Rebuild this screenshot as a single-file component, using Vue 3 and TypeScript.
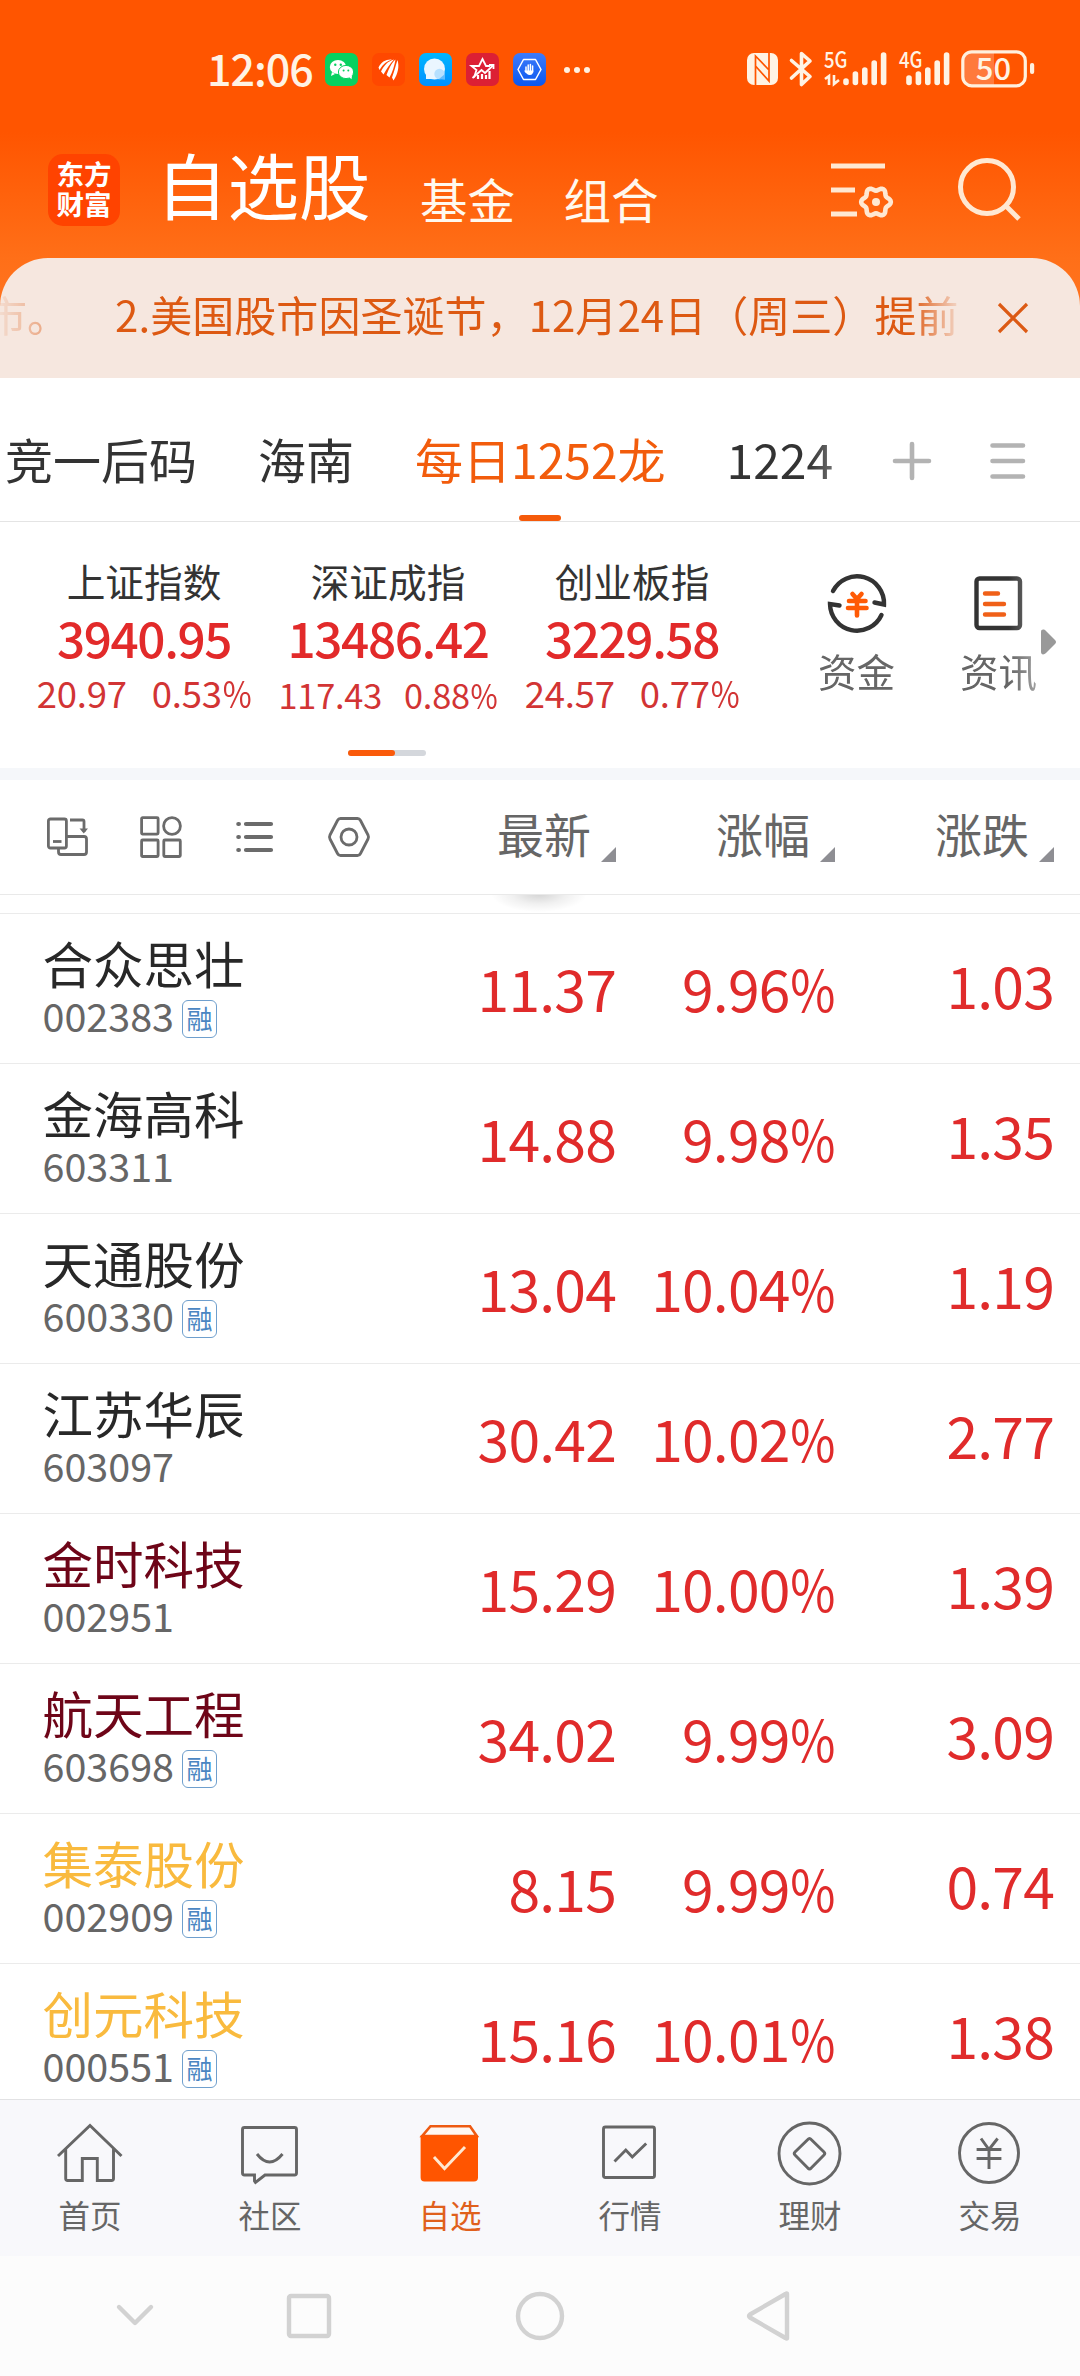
<script setup lang="ts">
interface Quote {
  name: string
  value: string
  change: string
  percent: string
  small?: boolean
}
interface Stock {
  name: string
  code: string
  margin: boolean
  price: string
  percent: string
  change: string
  tone: string
}
interface Signal {
  label: string
  arrows: boolean
  tops: number[]
  x0: number
  width: number
}

const signals: Signal[] = [
  { label: '5G', arrows: true, tops: [27, 20, 16, 9, 1], x0: 22, width: 64 },
  { label: '4G', arrows: false, tops: [24, 20, 16, 9, 1], x0: 10, width: 52 },
]

const quotes: Quote[] = [
  { name: '上证指数', value: '3940.95', change: '20.97', percent: '0.53' },
  { name: '深证成指', value: '13486.42', change: '117.43', percent: '0.88', small: true },
  { name: '创业板指', value: '3229.58', change: '24.57', percent: '0.77' },
]

const columns: string[] = ['最新', '涨幅', '涨跌']

const stocks: Stock[] = [
  { name: '合众思壮', code: '002383', margin: true, price: '11.37', percent: '9.96', change: '1.03', tone: 'plain' },
  { name: '金海高科', code: '603311', margin: false, price: '14.88', percent: '9.98', change: '1.35', tone: 'plain' },
  { name: '天通股份', code: '600330', margin: true, price: '13.04', percent: '10.04', change: '1.19', tone: 'plain' },
  { name: '江苏华辰', code: '603097', margin: false, price: '30.42', percent: '10.02', change: '2.77', tone: 'plain' },
  { name: '金时科技', code: '002951', margin: false, price: '15.29', percent: '10.00', change: '1.39', tone: 'wine' },
  { name: '航天工程', code: '603698', margin: true, price: '34.02', percent: '9.99', change: '3.09', tone: 'wine' },
  { name: '集泰股份', code: '002909', margin: true, price: '8.15', percent: '9.99', change: '0.74', tone: 'gold' },
  { name: '创元科技', code: '000551', margin: true, price: '15.16', percent: '10.01', change: '1.38', tone: 'gold' },
]

// Six-lobed outline of the settings gear
const gear: string =
  Array.from({ length: 72 }, (_, i) => {
    const a = (i * Math.PI) / 36
    const r = 13.1 + 1.7 * Math.cos(6 * a)
    return `${i ? 'L' : 'M'}${(45 + r * Math.cos(a)).toFixed(2)} ${(42 + r * Math.sin(a)).toFixed(2)}`
  }).join('') + 'Z'
</script>

<template>
  <div class="screen">
    <header class="top">
      <div class="status">
        <span class="clock">12:06</span>
        <div class="apps">
          <svg width="33" height="33" viewBox="0 0 33 33">
            <rect width="33" height="33" rx="7" fill="#07d160" />
            <ellipse cx="13" cy="14" rx="8.2" ry="7" fill="#fff" />
            <path d="M7 19l-1 4 4-2z" fill="#fff" />
            <circle cx="10.300" cy="11.800" r="1.200" fill="#07d160" />
            <circle cx="15.800" cy="11.800" r="1.200" fill="#07d160" />
            <ellipse cx="21" cy="19" rx="7.600" ry="6.600" fill="#fff" stroke="#07d160" stroke-width="1" />
            <path d="M24 24l2.500 2.200.5-4z" fill="#fff" />
            <circle cx="18.600" cy="17.500" r="1" fill="#07d160" />
            <circle cx="23.300" cy="17.500" r="1" fill="#07d160" />
          </svg>
          <svg width="33" height="33" viewBox="0 0 33 33">
            <rect width="33" height="33" rx="7" fill="#ff4800" />
            <path d="M6.500 14.500C9 9 14 6 20 6.500 15 8 11 11 7.500 17z" fill="#fff" />
            <path d="M9 18.500C12 12.500 16 8 22 6.500 17.500 11 15 15.500 11.500 21.500z" fill="#fff" />
            <path d="M14.500 22C17 16 19 10.500 23.500 6.500 22.500 12.500 20.500 19 17.500 24.500z" fill="#fff" />
            <path d="M20 24.500C22.500 18 23.500 13 25.500 7 27.500 13.500 26 21 21.500 27.500z" fill="#fff" />
          </svg>
          <svg width="33" height="33" viewBox="0 0 33 33">
            <defs>
              <linearGradient id="chat" x1="0" y1="0" x2="0" y2="1">
                <stop offset="0" stop-color="#00b6ff" />
                <stop offset="1" stop-color="#0090ff" />
              </linearGradient>
            </defs>
            <rect width="33" height="33" rx="7" fill="url(#chat)" />
            <circle cx="15.500" cy="16" r="10.500" fill="#eaf6ff" />
            <path d="M7 21v5h8z" fill="#eaf6ff" />
            <circle cx="20.500" cy="21" r="5.200" fill="#b5e0ff" />
            <path d="M20 26l6 .8V21z" fill="#5fbcff" />
          </svg>
          <svg width="33" height="33" viewBox="0 0 33 33" fill="none" stroke="#fff" stroke-width="1.800">
            <rect width="33" height="33" rx="7" fill="#dc2034" stroke="none" />
            <path d="M8 24.500l2.500-7.500L5.500 13h7.500l3.500-7 3.500 7h4" />
            <path d="M6.500 25l9-8 3.500 3 8-7.500" />
            <path d="M23 12h4.500v4" />
            <path d="M12 26v-4M16 26v-5M20 26v-4M23.500 26v-8" stroke-width="2.200" />
          </svg>
          <svg width="33" height="33" viewBox="0 0 33 33">
            <defs>
              <linearGradient id="guard" x1="0" y1="0" x2="0" y2="1">
                <stop offset="0" stop-color="#3d7bfa" />
                <stop offset="1" stop-color="#0a57f0" />
              </linearGradient>
            </defs>
            <rect width="33" height="33" rx="7" fill="url(#guard)" />
            <path d="M10.500 6.500h12l5.500 10-5.500 10h-12L5 16.500z" fill="none" stroke="#fff" stroke-width="1.500" stroke-linejoin="round" />
            <path d="M13 14v5M15.200 12v6M17.400 11.500v7M19.600 13v6" stroke="#fff" stroke-width="1.500" stroke-linecap="round" />
            <path d="M12.300 17.500h8c0 2.500-1 4.500-3.500 4.500s-3.500-1.500-5.800-4.200z" fill="#fff" />
          </svg>
        </div>
        <svg class="more" width="28" height="8" viewBox="0 0 28 8" fill="#fff3e4">
          <circle cx="4" cy="4" r="3" />
          <circle cx="14" cy="4" r="3" />
          <circle cx="24" cy="4" r="3" />
        </svg>
        <div class="radios">
          <svg class="nfc" width="31" height="32" viewBox="0 0 31 32">
            <rect width="31" height="32" rx="7" fill="#fff3e4" />
            <path d="M8.500 32V3l13.500 14V0M8.500 13l13.500 15V3" fill="none" stroke="#ff5500" stroke-width="1.700" />
          </svg>
          <svg class="bt" width="24" height="36" viewBox="0 0 24 36" fill="none" stroke="#fff3e4" stroke-width="3.600" stroke-linejoin="round" stroke-linecap="round">
            <path d="M2.500 9.500l18.500 16-8.500 8V2.500l8.500 7.500L2.500 27" />
          </svg>
          <svg
            v-for="s in signals"
            :key="s.label"
            class="signal"
            :width="s.width"
            height="36"
            :viewBox="`0 0 ${s.width} 36`"
            fill="none"
            stroke="#fff3e4"
          >
            <text x="0" y="17" font-size="22.500" textLength="23.500" lengthAdjust="spacingAndGlyphs">{{ s.label }}</text>
            <path v-if="s.arrows" d="M1 28l4-3v9M10 24v9l5-4" stroke-width="2.600" />
            <path
              v-for="(t, i) in s.tops"
              :key="i"
              :d="`M${s.x0 + i * 9.4} ${t + 3}V31.500`"
              stroke-width="5.600"
              stroke-linecap="round"
            />
          </svg>
          <svg class="battery" width="74" height="38" viewBox="0 0 74 38">
            <path d="M11 3H33V35H11a8 8 0 0 1-8-8V11a8 8 0 0 1 8-8z" fill="#ff7a3c" />
            <rect x="1.800" y="1.800" width="62.500" height="34" rx="9" fill="none" stroke="#fff0de" stroke-width="3.200" />
            <rect x="69" y="13" width="4.200" height="11" rx="2" fill="#fff0de" />
            <text x="32.500" y="30" font-size="31" text-anchor="middle">50</text>
          </svg>
        </div>
      </div>
      <nav class="titlebar">
        <div class="logo"><span>东方</span><span>财富</span></div>
        <span class="title">自选股</span>
        <span class="sub">基金</span>
        <span class="sub">组合</span>
        <svg class="filter" width="66" height="62" viewBox="0 0 66 62" fill="none" stroke="#ffe8d2" stroke-width="5">
          <path d="M0 6H54M0 30H24M0 54H26" />
          <path :d="gear" stroke-width="4.600" />
          <circle cx="45" cy="42" r="4" fill="#ffe8d2" stroke="none" />
        </svg>
        <svg class="search" width="64" height="64" viewBox="0 0 64 64" fill="none" stroke="#ffe8d2" stroke-width="5">
          <circle cx="29" cy="29" r="26.500" />
          <path d="M47.500 47.500L61 61" />
        </svg>
      </nav>
      <div class="notice">
        <div class="ticker"><span>市。</span><span class="msg">2.美国股市因圣诞节，12月24日（周三）提前</span></div>
        <svg width="30" height="30" viewBox="0 0 30 30" stroke="#dc5a14" stroke-width="3.200">
          <path d="M1 1L29 29M29 1L1 29" />
        </svg>
      </div>
    </header>

    <section class="tabs">
      <div class="groups">
        <span>竞一后码</span>
        <span>海南</span>
        <span class="on">每日1252龙</span>
        <span>1224</span>
      </div>
      <svg class="plus" width="40" height="40" viewBox="0 0 40 40" stroke="#b3b3b3" stroke-width="4.600" stroke-linecap="round">
        <path d="M20 3V37M3 20H37" />
      </svg>
      <svg class="menu" width="38" height="40" viewBox="0 0 38 40" stroke="#b3b3b3" stroke-width="4.600" stroke-linecap="round">
        <path d="M3.500 4.500H34M3.500 20H34M3.500 35.500H34" />
      </svg>
    </section>

    <section class="indices">
      <div class="quotes">
        <div v-for="q in quotes" :key="q.name" class="quote">
          <span class="qname">{{ q.name }}</span>
          <span class="qvalue">{{ q.value }}</span>
          <span class="qsub" :class="{ small: q.small }">
            <span>{{ q.change }}</span><span>{{ q.percent }}<i class="pct">%</i></span>
          </span>
        </div>
        <div class="pager"><b></b></div>
      </div>
      <div class="tools">
        <div class="tool">
          <svg width="64" height="64" viewBox="0 0 64 64" fill="none" stroke="#333" stroke-width="4.400" stroke-linecap="round">
            <path d="M8 20A27 27 0 0 1 59 33.500L49.500 31.500" />
            <path d="M56.500 44A27 27 0 0 1 5 33L14.500 34.500" />
            <path d="M27.500 23L32 28 36.500 23M24 30H40.500M23 37H41.500M32 28V44.500" stroke="#ff5a05" stroke-width="4.600" />
          </svg>
          <span>资金</span>
        </div>
        <div class="tool">
          <svg width="64" height="64" viewBox="0 0 64 64" fill="none" stroke="#333" stroke-width="4.400" stroke-linecap="round">
            <rect x="9.500" y="7.500" width="43.500" height="49.500" rx="3" />
            <path d="M18 22.500H31M18 33H37M18 43.500H37" stroke="#f06018" />
          </svg>
          <span>资讯</span>
        </div>
      </div>
      <svg class="next" width="16" height="26" viewBox="0 0 16 26">
        <path d="M0 3C0 0 3 0 5 2L14 11Q16 13 14 15L5 24C3 26 0 26 0 23z" fill="#999" />
      </svg>
    </section>

    <section class="thead">
      <div class="views">
        <svg width="44" height="44" viewBox="0 0 44 44" fill="none" stroke="#6b6b6b" stroke-width="2.800">
          <rect x="3.400" y="4" width="18" height="29" rx="2" />
          <path d="M8 26.500H16.500" />
          <path d="M13.500 33v4q0 2.500 2.500 2.500H39q2.500 0 2.500-2.500V24q0-2.500-2.500-2.500H22" />
          <path d="M25 5H37.500q1.500 0 1.500 1.500V17" />
          <path d="M34.500 13.500H43L38.800 18.500z" fill="#6b6b6b" stroke="none" />
        </svg>
        <svg width="44" height="44" viewBox="0 0 44 44" fill="none" stroke="#6b6b6b" stroke-width="2.800">
          <rect x="2.600" y="2.600" width="16.500" height="16.500" rx="1" />
          <circle cx="33" cy="11" r="8.400" />
          <rect x="2.600" y="25" width="16.500" height="16.500" rx="1" />
          <rect x="24.800" y="25" width="16.500" height="16.500" rx="1" />
        </svg>
        <svg width="44" height="44" viewBox="0 0 44 44" fill="none" stroke="#6b6b6b" stroke-width="4.200" stroke-linecap="round">
          <path d="M13 9H38M13 22H38M13 35H38M5.300 9h.6M5.300 22h.6M5.300 35h.6" />
        </svg>
        <svg width="44" height="44" viewBox="0 0 44 44" fill="none" stroke="#6b6b6b" stroke-width="2.800" stroke-linejoin="round">
          <path d="M13.500 3.500H30.500Q32.500 3.500 33.500 5.500L41 20Q42 22 41 24L33.500 38.500Q32.500 40.500 30.500 40.500H13.500Q11.500 40.500 10.500 38.500L3 24Q2 22 3 20L10.500 5.500Q11.500 3.500 13.500 3.500z" />
          <circle cx="22" cy="22" r="8" />
        </svg>
      </div>
      <div v-for="c in columns" :key="c" class="col">
        <span>{{ c }}</span>
        <svg width="15" height="15" viewBox="0 0 15 15"><path d="M15 0V15H0z" fill="#8e8e93" /></svg>
      </div>
    </section>

    <main class="list">
      <div class="peek"><i></i></div>
      <div v-for="s in stocks" :key="s.code" class="row">
        <div class="who">
          <span class="name" :class="s.tone">{{ s.name }}</span>
          <span class="code">{{ s.code }}<em v-if="s.margin">融</em></span>
        </div>
        <span class="num price">{{ s.price }}</span>
        <span class="num percent">{{ s.percent }}<i class="pct">%</i></span>
        <span class="num change">{{ s.change }}</span>
      </div>
    </main>

    <nav class="tabbar">
      <div class="item">
        <svg width="72" height="72" viewBox="0 0 72 72"><path d="M4 38L36 7.500 67.500 38M11.700 31V60.500q0 2 2 2H28.300V40.500H43.300V62.500H57.500q2 0 2-2V31" /></svg>
        <span>首页</span>
      </div>
      <div class="item">
        <svg width="72" height="72" viewBox="0 0 72 72">
          <path d="M10.500 9.500H60.500q2 0 2 2V55q0 2-2 2H31L21.500 64.500 20.500 63V57H10.500q-2 0-2-2V11.500q0-2 2-2z" />
          <path d="M23 36Q35.500 52 48.500 36" />
        </svg>
        <span>社区</span>
      </div>
      <div class="item on">
        <svg width="72" height="72" viewBox="0 0 72 72">
          <path d="M16.500 8.200H56L62.800 18H8.200z" stroke="#ee5a12" fill="#fff8f2" stroke-width="2.600" />
          <path d="M6.600 17.500H64V59.500a4 4 0 0 1-4 4H10.600a4 4 0 0 1-4-4z" fill="#ff5500" stroke="none" />
          <path d="M20 39L30.500 50.500 51 29" stroke="#ffe8d0" />
        </svg>
        <span>自选</span>
      </div>
      <div class="item">
        <svg width="72" height="72" viewBox="0 0 72 72">
          <rect x="9.500" y="9" width="51" height="50.500" rx="2" />
          <path d="M20.500 43.500L31.800 32 38.300 39 52.200 25.500" />
        </svg>
        <span>行情</span>
      </div>
      <div class="item">
        <svg width="72" height="72" viewBox="0 0 72 72">
          <circle cx="35.500" cy="35.500" r="30.500" />
          <path d="M33.800 21.500Q35.500 19.500 37.200 21.500L50 34Q51.500 35.500 50 37L37.200 50Q35.500 52 33.800 50L21 37Q19.500 35.500 21 34z" />
        </svg>
        <span>理财</span>
      </div>
      <div class="item">
        <svg width="72" height="72" viewBox="0 0 72 72">
          <circle cx="35" cy="35" r="29.500" />
          <path d="M27 20.500L35 31.500 43.600 20.500M22.600 31.500H47.400M22.600 40.500H47.400M35 31V51" />
        </svg>
        <span>交易</span>
      </div>
    </nav>

    <footer class="sysbar">
      <svg class="k1" width="48" height="60" viewBox="0 0 48 60"><path d="M8 21L24 37 40 21" /></svg>
      <svg class="k2" width="48" height="60" viewBox="0 0 48 60"><rect x="4" y="10" width="40" height="40" rx="2" /></svg>
      <svg class="k3" width="48" height="60" viewBox="0 0 48 60"><circle cx="24" cy="30" r="22" /></svg>
      <svg class="k4" width="48" height="60" viewBox="0 0 48 60"><path d="M42 8V52Q42 53 40.500 52L5 31.500Q3 30 5 28.500L40.500 8Q42 7 42 8z" /></svg>
    </footer>
  </div>
</template>

<style>
body {
  background: #fff;
}
</style>

<style scoped>
.screen {
  display: flex;
  flex-direction: column;
  width: 1080px;
  height: 2376px;
  overflow: hidden;
  background: #fff;
  font-family: "Noto Sans CJK SC", sans-serif;
  line-height: 1;
  white-space: nowrap;
}
svg {
  display: block;
  flex: none;
  overflow: visible;
}
i,
em {
  font-style: normal;
}

/* header */
.top {
  flex: none;
  height: 378px;
  background: linear-gradient(#ff5500 0, #ff5500 132px, #ff6f18 258px, #ff7420 310px);
}
.status {
  display: flex;
  height: 130px;
  box-sizing: border-box;
  padding: 50px 0 0 207px;
}
.clock {
  width: 118px;
  margin-top: -4px;
  color: #fff3e4;
  font-size: 43px;
  font-weight: 500;
  letter-spacing: -1px;
}
.apps {
  display: flex;
  gap: 14px;
  margin-top: 3px;
}
.more {
  margin: 15.500px 0 0 17px;
}
.radios {
  display: flex;
  margin-left: 156px;
}
.radios text {
  fill: #fff3e4;
  stroke: none;
  font-weight: 500;
}
.nfc {
  margin-top: 3px;
}
.bt {
  margin: 1px 0 0 11px;
}
.signal {
  margin: 1px 0 0 11px;
}
.battery {
  margin-left: 10px;
}
.titlebar {
  display: flex;
  height: 128px;
  color: #fff;
}
.logo {
  display: flex;
  flex-direction: column;
  align-items: center;
  gap: 2px;
  width: 72px;
  height: 72px;
  box-sizing: border-box;
  margin: 24px 0 0 48px;
  padding-top: 6px;
  border-radius: 15px;
  background: #ff4300;
  font-size: 27.500px;
  font-weight: 700;
}
.title {
  width: 262px;
  margin: 18px 0 0 36px;
  font-size: 71.500px;
}
.sub {
  width: 143.500px;
  margin-top: 45px;
  font-size: 47.500px;
  color: #fff8ee;
}
.sub:nth-of-type(2) {
  margin-left: 2px;
}
.filter {
  margin: 30px 0 0 124px;
}
.search {
  margin: 28px 0 0 61px;
}
.notice {
  display: flex;
  height: 120px;
  border-radius: 48px 48px 0 0;
  background: #f6e7df;
  color: #dd5912;
}
.ticker {
  width: 957px;
  height: 100px;
  box-sizing: border-box;
  margin-right: 41px;
  padding-top: 34.500px;
  overflow: hidden;
  font-size: 42px;
  letter-spacing: 0.050px;
  -webkit-mask-image: linear-gradient(90deg, transparent -10px, #000 115px, #000 910px, transparent 965px);
  mask-image: linear-gradient(90deg, transparent -10px, #000 115px, #000 910px, transparent 965px);
}
.ticker span:first-child {
  margin-left: -15px;
}
.msg {
  margin-left: 46px;
}
.notice svg {
  margin-top: 45px;
}

/* watchlist groups */
.tabs {
  display: flex;
  flex: none;
  height: 144px;
  box-sizing: border-box;
  border-bottom: 1px solid #e4e4e4;
}
.groups {
  display: flex;
  gap: 61px;
  width: 843px;
  padding-left: 5px;
  box-sizing: border-box;
  color: #333;
  font-size: 48px;
  -webkit-mask-image: linear-gradient(90deg, #000 808px, rgba(0, 0, 0, 0.6) 843px);
  mask-image: linear-gradient(90deg, #000 808px, rgba(0, 0, 0, 0.6) 843px);
}
.groups span {
  padding-top: 56px;
}
.groups .on {
  display: flex;
  flex-direction: column;
  align-items: center;
  color: #f25c0c;
}
.groups .on::after {
  content: "";
  width: 42px;
  height: 6px;
  margin-top: 33px;
  border-radius: 3px;
  background: #f55a0a;
}
.plus {
  margin: 63px 0 0 49px;
}
.menu {
  margin: 63px 0 0 56.500px;
}

/* market indices */
.indices {
  display: flex;
  flex: none;
  height: 246px;
}
.quotes {
  display: flex;
  flex-wrap: wrap;
  width: 732px;
  margin-left: 22px;
  align-content: flex-start;
}
.quote {
  display: flex;
  flex-direction: column;
  align-items: center;
  width: 244px;
  height: 228px;
}
.qname {
  margin-top: 38.500px;
  color: #333;
  font-size: 38.700px;
}
.qvalue {
  margin-top: 13px;
  color: #e22a2a;
  font-size: 49.500px;
  font-weight: 500;
  letter-spacing: -1.400px;
}
.qsub {
  display: flex;
  gap: 25px;
  height: 38px;
  margin-top: 13.500px;
  color: #d23434;
  font-size: 36.500px;
  letter-spacing: -0.200px;
}
.qsub.small {
  gap: 22px;
  padding-top: 1.500px;
  font-size: 34.300px;
}
.pct {
  display: inline-block;
  margin-left: -0.11em;
  transform: scaleX(0.86);
  transform-origin: right;
}
.pager {
  width: 78px;
  height: 6px;
  margin-left: 326px;
  border-radius: 3px;
  background: #d4d7dc;
}
.pager b {
  display: block;
  width: 47px;
  height: 6px;
  border-radius: 3px;
  background: #fa5a0a;
}
.tools {
  display: flex;
  gap: 65px;
  width: 284px;
  padding-left: 64px;
  box-sizing: border-box;
  color: #666;
  font-size: 38.500px;
  -webkit-mask-image: linear-gradient(90deg, #000 255px, rgba(0, 0, 0, 0.6) 284px);
  mask-image: linear-gradient(90deg, #000 255px, rgba(0, 0, 0, 0.6) 284px);
}
.tool {
  display: flex;
  flex-direction: column;
  align-items: center;
  width: 77px;
  flex: none;
}
.tool svg {
  margin: 49px 0 0;
}
.tool span {
  margin-top: 16px;
}
.next {
  margin: 107px 0 0 3px;
}

/* table header */
.thead {
  display: flex;
  flex: none;
  height: 127px;
  box-sizing: border-box;
  border-top: 12px solid #f5f7fa;
  border-bottom: 1px solid #e9e9e9;
}
.views {
  display: flex;
  gap: 50px;
  width: 397px;
  padding: 35px 0 0 45px;
  box-sizing: border-box;
}
.col {
  display: flex;
  justify-content: flex-end;
  width: 219px;
  color: #666;
  font-size: 47px;
}
.col span {
  margin: 29px 10px 0 0;
}
.col svg {
  margin-top: 67px;
}

/* stock list */
.list {
  flex: none;
  height: 1204px;
  overflow: hidden;
}
.peek {
  height: 19px;
  box-sizing: border-box;
  border-bottom: 1px solid #ebebeb;
  overflow: hidden;
}
.peek i {
  display: block;
  width: 96px;
  height: 36px;
  margin: -19px 0 0 491px;
  background: radial-gradient(closest-side, rgba(0, 0, 0, 0.17), rgba(0, 0, 0, 0.06) 55%, transparent);
}
.row {
  display: flex;
  height: 150px;
  box-sizing: border-box;
  border-bottom: 1px solid #ebebeb;
}
.who {
  display: flex;
  flex-direction: column;
  width: 397px;
  padding: 22.500px 0 0 42.500px;
  box-sizing: border-box;
}
.name {
  font-size: 50.500px;
}
.plain {
  color: #282828;
}
.wine {
  color: #6e0518;
}
.gold {
  color: #f9ba3e;
}
.code {
  display: flex;
  margin-top: 8px;
  color: #666;
  font-size: 39.500px;
}
.code em {
  width: 35px;
  height: 38px;
  box-sizing: border-box;
  margin: 5px 0 0 8px;
  padding-top: 2px;
  border: 1.500px solid #6f9fcd;
  border-radius: 6px;
  color: #4a86c2;
  font-size: 26px;
  line-height: 30px;
  text-align: center;
}
.num {
  width: 219px;
  padding-top: 44.500px;
  color: #e02b2b;
  font-size: 57px;
  letter-spacing: -0.800px;
  text-align: right;
}
.change {
  padding-top: 41.500px;
}

/* bottom tabs */
.tabbar {
  display: flex;
  flex: none;
  height: 157px;
  box-sizing: border-box;
  border-top: 1px solid #e2e2e4;
  background: #f8f8fb;
  color: #666;
  font-size: 31.500px;
}
.item {
  display: flex;
  flex-direction: column;
  align-items: center;
  width: 180px;
}
.item svg {
  margin-top: 18px;
  fill: none;
  stroke: #666;
  stroke-width: 2.900;
}
.item span {
  margin-top: 9px;
}
.item.on {
  color: #e0601c;
}

/* system keys */
.sysbar {
  display: flex;
  flex: none;
  height: 120px;
  background: #fcfcfc;
}
.sysbar svg {
  margin-top: 30px;
  fill: none;
  stroke: #d2d2d2;
  stroke-width: 4.400;
  stroke-linecap: round;
  stroke-linejoin: round;
}
.k1 {
  margin-left: 110.500px;
}
.k2 {
  margin-left: 126.500px;
}
.k3 {
  margin-left: 183px;
}
.k4 {
  margin-left: 181px;
}
</style>
